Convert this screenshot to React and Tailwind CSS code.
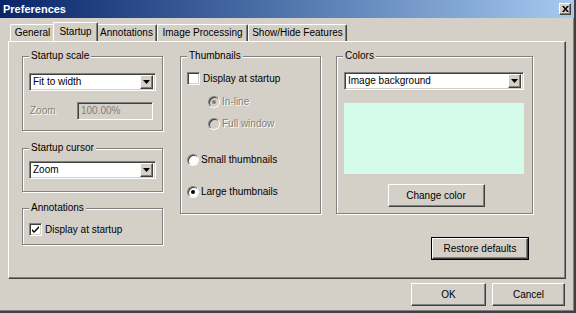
import React from "react";

const F = "font-['Liberation_Sans',Arial,sans-serif]";

const raised =
  "border border-t-white border-l-white border-r-[#404040] border-b-[#404040] shadow-[inset_-1px_-1px_0_#808080,inset_1px_1px_0_#d4d0c8]";
const sunken =
  "border border-t-[#808080] border-l-[#808080] border-r-white border-b-white shadow-[inset_1px_1px_0_#404040,inset_-1px_-1px_0_#d4d0c8]";

function Group({ title, className = "", children }) {
  return (
    <div
      className={
        "relative border border-[#808080] shadow-[inset_1px_1px_0_#fff,1px_1px_0_#fff] " +
        className
      }
    >
      <span className="absolute -top-[7px] left-[6px] bg-[#d4d0c8] px-[2px] text-[10px] leading-[12px] text-black">
        {title}
      </span>
      {children}
    </div>
  );
}

function Combo({ value, className = "" }) {
  return (
    <div className={"flex h-[18px] items-center bg-white " + sunken + " " + className}>
      <span className="flex-1 pl-[3px] text-[10px] leading-[12px] text-black">{value}</span>
      <div className={"mr-[2px] flex h-[14px] w-[13px] items-center justify-center bg-[#d4d0c8] " + raised}>
        <svg width="7" height="4" viewBox="0 0 7 4">
          <path d="M0 0h7L3.5 4z" fill="#000" />
        </svg>
      </div>
    </div>
  );
}

function Check({ checked, label }) {
  return (
    <div className="flex items-center gap-[3px]">
      <div className={"flex h-[13px] w-[13px] items-center justify-center bg-white " + sunken}>
        {checked && (
          <svg width="7" height="7" viewBox="0 0 7 7">
            <path d="M0 3l2 2 5-5v2L2 7 0 5z" fill="#000" />
          </svg>
        )}
      </div>
      <span className="text-[10px] leading-[12px] text-black">{label}</span>
    </div>
  );
}

function Radio({ checked, label, disabled }) {
  return (
    <div className="flex items-center gap-[2px]">
      <div className="relative h-[12px] w-[12px] rounded-full border border-t-[#808080] border-l-[#808080] border-r-white border-b-white">
        <div
          className={
            "flex h-full w-full items-center justify-center rounded-full shadow-[inset_1px_1px_0_#404040] " +
            (disabled ? "bg-[#d4d0c8]" : "bg-white")
          }
        >
          {checked && (
            <div className={"h-[4px] w-[4px] rounded-full " + (disabled ? "bg-[#808080]" : "bg-black")} />
          )}
        </div>
      </div>
      <span
        className={
          "text-[10px] leading-[12px] " +
          (disabled ? "text-[#808080] [text-shadow:1px_1px_0_#fff]" : "text-black")
        }
      >
        {label}
      </span>
    </div>
  );
}

function Button({ children, className = "", focus }) {
  const inner = (
    <div
      className={
        "flex h-full w-full items-center justify-center bg-[#d4d0c8] text-[10px] leading-[12px] text-black " +
        raised
      }
    >
      {children}
    </div>
  );
  if (focus)
    return <div className={"border border-black " + className}>{inner}</div>;
  return <div className={className}>{inner}</div>;
}

function Tab({ label, selected, className = "" }) {
  return (
    <div
      className={
        "flex items-center justify-center rounded-t-[2px] border-t border-l border-t-white border-l-white border-r border-r-[#404040] shadow-[inset_-1px_0_0_#808080] bg-[#d4d0c8] text-[10px] leading-[12px] text-black " +
        (selected ? "z-10 -mx-[2px] h-[19px] self-end" : "h-[17px] self-end") +
        " " +
        className
      }
    >
      {label}
    </div>
  );
}

export default function App() {
  return (
    <div className={"h-[313px] w-[576px] overflow-hidden bg-[#d4d0c8] " + F}>
      <div className="relative flex h-[313px] w-[576px] flex-col border-r-2 border-b-2 border-r-[#404040] border-b-[#404040] shadow-[inset_-1px_-1px_0_#808080]">
        {/* Title bar */}
        <div className="flex h-[18px] items-center bg-gradient-to-r from-[#0a246a] to-[#a6caf0] pl-[3px] pr-[2px]">
          <span className="flex-1 text-[11px] font-bold leading-[13px] text-white">Preferences</span>
          <div className={"mr-[1px] flex h-[12px] w-[12px] items-center justify-center bg-[#d4d0c8] " + raised}>
            <svg width="7" height="6" viewBox="0 0 7 6">
              <path d="M0 0h2l1.5 2L5 0h2L4.5 3 7 6H5L3.5 4 2 6H0l2.5-3z" fill="#000" />
            </svg>
          </div>
        </div>

        {/* Tabs */}
        <div className="mt-[4px] flex h-[19px] items-end pl-[10px]">
          <Tab label="General" className="w-[45px]" />
          <Tab label="Startup" selected className="w-[45px]" />
          <Tab label="Annotations" className="w-[61px]" />
          <Tab label="Image Processing" className="w-[91px]" />
          <Tab label="Show/Hide Features" className="w-[99px]" />
        </div>

        {/* Panel */}
        <div className="ml-[8px] h-[238px] w-[558px] border border-t-white border-l-white border-r-[#404040] border-b-[#404040] shadow-[inset_-1px_-1px_0_#808080] pl-[13px] pt-[14px]">
          <div className="flex">
            {/* Left column */}
            <div className="flex w-[141px] flex-col">
              <Group title="Startup scale" className="h-[75px] pl-[6px] pt-[16px]">
                <Combo value="Fit to width" className="w-[127px]" />
                <div className="mt-[11px] flex items-center">
                  <span className="w-[48px] pl-[1px] text-[10px] leading-[12px] text-[#808080] [text-shadow:1px_1px_0_#fff]">
                    Zoom
                  </span>
                  <div className={"flex h-[18px] w-[76px] items-center bg-[#d4d0c8] pl-[3px] text-[10px] leading-[12px] text-[#808080] " + sunken}>
                    100.00%
                  </div>
                </div>
              </Group>
              <Group title="Startup cursor" className="mt-[17px] h-[44px] pl-[6px] pt-[12px]">
                <Combo value="Zoom" className="w-[127px]" />
              </Group>
              <Group title="Annotations" className="mt-[16px] h-[37px] pl-[6px] pt-[14px]">
                <Check checked label="Display at startup" />
              </Group>
            </div>

            {/* Right side */}
            <div className="ml-[17px] flex flex-col">
              <div className="flex">
                <Group title="Thumbnails" className="h-[158px] w-[141px] pl-[6px] pt-[15px]">
                  <Check label="Display at startup" />
                  <div className="mt-[11px] flex flex-col gap-[10px] pl-[21px]">
                    <Radio checked disabled label="In-line" />
                    <Radio disabled label="Full window" />
                  </div>
                  <div className="mt-[24px] flex flex-col gap-[20px]">
                    <Radio label="Small thumbnails" />
                    <Radio checked label="Large thumbnails" />
                  </div>
                </Group>
                <Group title="Colors" className="ml-[15px] h-[158px] w-[197px] pl-[7px] pt-[15px]">
                  <Combo value="Image background" className="w-[180px]" />
                  <div className="mt-[13px] h-[71px] w-[180px] bg-[#d5fbea]" />
                  <div className="mt-[10px] flex w-[180px] justify-center pl-[4px]">
                    <Button className="h-[23px] w-[97px]">Change color</Button>
                  </div>
                </Group>
              </div>
              <div className="mt-[23px] flex justify-end pr-[4px]">
                <Button focus className="h-[23px] w-[98px]">Restore defaults</Button>
              </div>
            </div>
          </div>
        </div>

        {/* Bottom buttons */}
        <div className="mt-[4px] flex justify-end gap-[6px] pr-[9px]">
          <Button className="h-[23px] w-[75px]">OK</Button>
          <Button className="h-[23px] w-[73px]">Cancel</Button>
        </div>
      </div>
    </div>
  );
}
